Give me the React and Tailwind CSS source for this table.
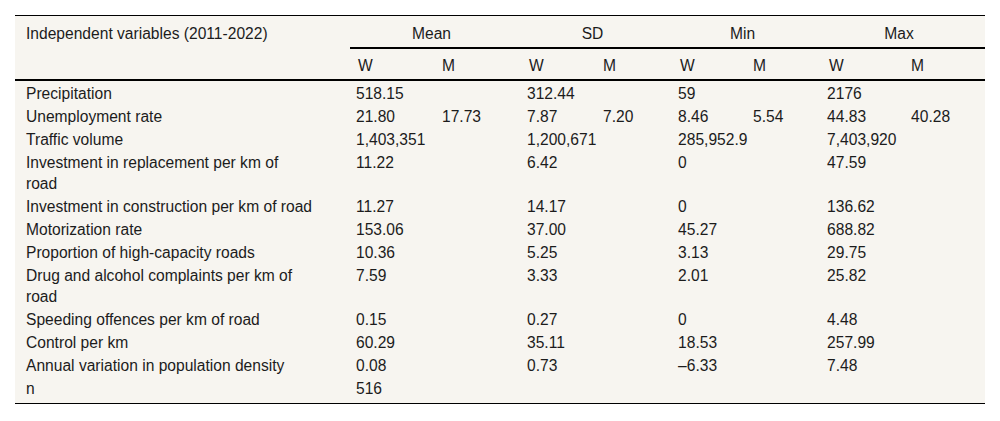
const rows = [
  { label: "Precipitation", v: ["518.15", "", "312.44", "", "59", "", "2176", ""] },
  { label: "Unemployment rate", v: ["21.80", "17.73", "7.87", "7.20", "8.46", "5.54", "44.83", "40.28"] },
  { label: "Traffic volume", v: ["1,403,351", "", "1,200,671", "", "285,952.9", "", "7,403,920", ""] },
  { label: ["Investment in replacement per km of", "road"], v: ["11.22", "", "6.42", "", "0", "", "47.59", ""] },
  { label: "Investment in construction per km of road", v: ["11.27", "", "14.17", "", "0", "", "136.62", ""] },
  { label: "Motorization rate", v: ["153.06", "", "37.00", "", "45.27", "", "688.82", ""] },
  { label: "Proportion of high-capacity roads", v: ["10.36", "", "5.25", "", "3.13", "", "29.75", ""] },
  { label: ["Drug and alcohol complaints per km of", "road"], v: ["7.59", "", "3.33", "", "2.01", "", "25.82", ""] },
  { label: "Speeding offences per km of road", v: ["0.15", "", "0.27", "", "0", "", "4.48", ""] },
  { label: "Control per km", v: ["60.29", "", "35.11", "", "18.53", "", "257.99", ""] },
  { label: "Annual variation in population density", v: ["0.08", "", "0.73", "", "\u20136.33", "", "7.48", ""] },
  { label: "n", v: ["516", "", "", "", "", "", "", ""] },
];

const groups = ["Mean", "SD", "Min", "Max"];

export default function App() {
  return (
    <div className="bg-white w-[1000px] h-[421px] pt-[15px] pl-[15px] font-['Liberation_Sans',Arial,sans-serif] text-[15.6px] leading-[21px] text-[#1c1c1c]">
      <table className="w-[970px] table-fixed border-separate border-spacing-0 bg-[#f7f5f0] border-t border-b border-black">
        <colgroup>
          <col className="w-[335px]" />
          <col className="w-[86px]" />
          <col className="w-[85px]" />
          <col className="w-[76px]" />
          <col className="w-[75px]" />
          <col className="w-[75px]" />
          <col className="w-[74px]" />
          <col className="w-[84px]" />
          <col className="w-[80px]" />
        </colgroup>
        <thead>
          <tr>
            <th rowSpan={2} className="font-normal text-left align-top pl-[11px] pt-[7px] border-b-2 border-black">
              Independent variables (2011-2022)
            </th>
            {groups.map((g) => (
              <th key={g} colSpan={2} className="font-normal text-center pl-[4px] pr-[12px] pt-[7px] pb-[3px] border-b-2 border-black">
                {g}
              </th>
            ))}
          </tr>
          <tr>
            {groups.map((g) => (
              <>
                <th key={g + "w"} className="font-normal text-left pl-[8px] pt-[6px] pb-[3px] border-b-2 border-black">W</th>
                <th key={g + "m"} className="font-normal text-left pl-[6px] pt-[6px] pb-[3px] border-b-2 border-black">M</th>
              </>
            ))}
          </tr>
        </thead>
        <tbody>
          {rows.map((r, i) => {
            const last = i === rows.length - 1;
            const pad = last ? "pt-[2px] pb-[4px]" : "pt-[2px] pb-0";
            const label = Array.isArray(r.label) ? r.label : [r.label];
            return (
              <tr key={label[0]}>
                <td className={`pl-[11px] align-top whitespace-nowrap ${pad}`}>
                  {label.map((l, k) => (
                    <div key={k}>{l}</div>
                  ))}
                </td>
                {r.v.map((v, j) => (
                  <td key={j} className={`align-top pl-[6px] whitespace-nowrap ${pad}`}>
                    {v}
                  </td>
                ))}
              </tr>
            );
          })}
        </tbody>
      </table>
    </div>
  );
}
